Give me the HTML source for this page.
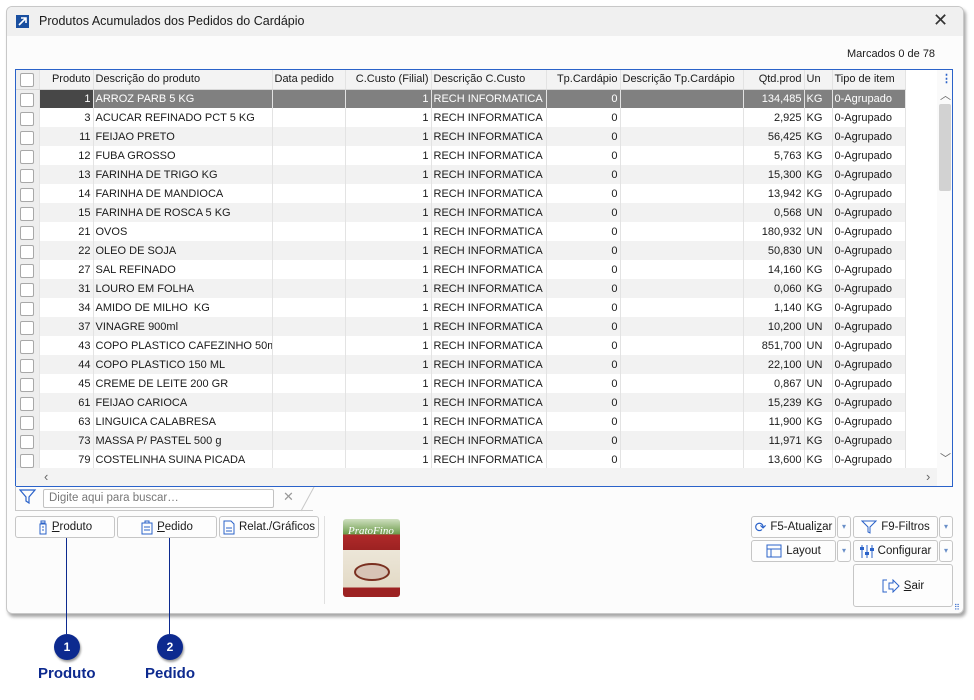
<!DOCTYPE html>
<html><head><meta charset="utf-8"><style>
*{box-sizing:border-box;margin:0;padding:0}
body{width:974px;height:700px;background:#fff;font-family:"Liberation Sans",sans-serif;font-size:11px;color:#1a1a1a;position:relative;overflow:hidden}
.abs{position:absolute}
.win{left:6px;top:6px;width:958px;height:608px;border:1px solid #c8c8c8;border-radius:6px;background:#fcfcfc;box-shadow:2px 3px 3px rgba(0,0,0,.35);overflow:hidden}
.title{left:0;top:0;width:100%;height:29px;background:#f0f0f0}
table{border-collapse:collapse;table-layout:fixed}
td{height:19px;border-right:1px solid #e3e3e3;padding:0 2px;white-space:nowrap;overflow:hidden;line-height:18px}
tr.h td{background:#f3f3f3;border-bottom:1px solid #d8d8d8}
tr.o td{background:#f2f2f2}
tr.e td{background:#fff}
tr.s td{background:#808080;color:#fff}
tr.s td.p{background:#474747}
td.c{background:#eeeeee!important;padding:0}
.cb{width:14px;height:14px;border:1px solid #a8a8a8;border-radius:2px;background:#fff;margin:2px 0 0 4px}
.r{text-align:right}
.btn{position:absolute;border:1px solid #c6c6c6;border-radius:3px;background:#fdfdfd;font-size:11.5px;display:flex;align-items:center;justify-content:center;gap:4px;white-space:nowrap}
.dd{position:absolute;width:14px;border:1px solid #c6c6c6;border-radius:3px;background:#fdfdfd;color:#6a8fc8;font-size:8px;text-align:center}
.circ{position:absolute;width:26px;height:26px;border-radius:50%;background:#0d2a8f;color:#fff;font-weight:bold;font-size:12px;text-align:center;line-height:26px;box-shadow:1px 2px 2px rgba(0,0,0,.4)}
.lbl{position:absolute;color:#0d2a8f;font-weight:bold;font-size:15px}
u{text-decoration:underline}
</style></head><body>
<div class="abs win">
 <div class="abs title"></div>
 <div class="abs" style="left:9px;top:8px;width:13px;height:13px;background:#1a4fa0"><svg width="13" height="13"><path d="M3 10L10 3M5 3H10V8" stroke="#fff" stroke-width="1.6" fill="none"/></svg></div>
 <div class="abs" style="left:32px;top:7px;font-size:12.5px">Produtos Acumulados dos Pedidos do Cardápio</div>
 <div class="abs" style="left:926px;top:3px;font-size:18px;color:#333">✕</div>
 <div class="abs" style="left:840px;top:41px;font-size:11px">Marcados 0 de 78</div>
</div>
<div class="abs" style="left:15px;top:69px;width:938px;height:418px;border:1px solid #2a62c9;background:#fff;overflow:hidden">
<table style="width:889px">
<colgroup><col style="width:23px"><col style="width:54px"><col style="width:179px"><col style="width:73px"><col style="width:86px"><col style="width:115px"><col style="width:74px"><col style="width:123px"><col style="width:61px"><col style="width:28px"><col style="width:73px"></colgroup>
<tr class="h"><td class="c"><div class="cb"></div></td><td class="r">Produto</td><td>Descrição do produto</td><td>Data pedido</td><td class="r">C.Custo (Filial)</td><td>Descrição C.Custo</td><td class="r">Tp.Cardápio</td><td>Descrição Tp.Cardápio</td><td class="r">Qtd.prod</td><td>Un</td><td>Tipo de item</td></tr>
<tr class="s"><td class="c"><div class="cb"></div></td><td class="r p">1</td><td>ARROZ PARB 5 KG</td><td></td><td class="r">1</td><td>RECH INFORMATICA</td><td class="r">0</td><td></td><td class="r">134,485</td><td>KG</td><td>0-Agrupado</td></tr>
<tr class="e"><td class="c"><div class="cb"></div></td><td class="r">3</td><td>ACUCAR REFINADO PCT 5 KG</td><td></td><td class="r">1</td><td>RECH INFORMATICA</td><td class="r">0</td><td></td><td class="r">2,925</td><td>KG</td><td>0-Agrupado</td></tr>
<tr class="o"><td class="c"><div class="cb"></div></td><td class="r">11</td><td>FEIJAO PRETO</td><td></td><td class="r">1</td><td>RECH INFORMATICA</td><td class="r">0</td><td></td><td class="r">56,425</td><td>KG</td><td>0-Agrupado</td></tr>
<tr class="e"><td class="c"><div class="cb"></div></td><td class="r">12</td><td>FUBA GROSSO</td><td></td><td class="r">1</td><td>RECH INFORMATICA</td><td class="r">0</td><td></td><td class="r">5,763</td><td>KG</td><td>0-Agrupado</td></tr>
<tr class="o"><td class="c"><div class="cb"></div></td><td class="r">13</td><td>FARINHA DE TRIGO KG</td><td></td><td class="r">1</td><td>RECH INFORMATICA</td><td class="r">0</td><td></td><td class="r">15,300</td><td>KG</td><td>0-Agrupado</td></tr>
<tr class="e"><td class="c"><div class="cb"></div></td><td class="r">14</td><td>FARINHA DE MANDIOCA</td><td></td><td class="r">1</td><td>RECH INFORMATICA</td><td class="r">0</td><td></td><td class="r">13,942</td><td>KG</td><td>0-Agrupado</td></tr>
<tr class="o"><td class="c"><div class="cb"></div></td><td class="r">15</td><td>FARINHA DE ROSCA 5 KG</td><td></td><td class="r">1</td><td>RECH INFORMATICA</td><td class="r">0</td><td></td><td class="r">0,568</td><td>UN</td><td>0-Agrupado</td></tr>
<tr class="e"><td class="c"><div class="cb"></div></td><td class="r">21</td><td>OVOS</td><td></td><td class="r">1</td><td>RECH INFORMATICA</td><td class="r">0</td><td></td><td class="r">180,932</td><td>UN</td><td>0-Agrupado</td></tr>
<tr class="o"><td class="c"><div class="cb"></div></td><td class="r">22</td><td>OLEO DE SOJA</td><td></td><td class="r">1</td><td>RECH INFORMATICA</td><td class="r">0</td><td></td><td class="r">50,830</td><td>UN</td><td>0-Agrupado</td></tr>
<tr class="e"><td class="c"><div class="cb"></div></td><td class="r">27</td><td>SAL REFINADO</td><td></td><td class="r">1</td><td>RECH INFORMATICA</td><td class="r">0</td><td></td><td class="r">14,160</td><td>KG</td><td>0-Agrupado</td></tr>
<tr class="o"><td class="c"><div class="cb"></div></td><td class="r">31</td><td>LOURO EM FOLHA</td><td></td><td class="r">1</td><td>RECH INFORMATICA</td><td class="r">0</td><td></td><td class="r">0,060</td><td>KG</td><td>0-Agrupado</td></tr>
<tr class="e"><td class="c"><div class="cb"></div></td><td class="r">34</td><td>AMIDO DE MILHO &nbsp;KG</td><td></td><td class="r">1</td><td>RECH INFORMATICA</td><td class="r">0</td><td></td><td class="r">1,140</td><td>KG</td><td>0-Agrupado</td></tr>
<tr class="o"><td class="c"><div class="cb"></div></td><td class="r">37</td><td>VINAGRE 900ml</td><td></td><td class="r">1</td><td>RECH INFORMATICA</td><td class="r">0</td><td></td><td class="r">10,200</td><td>UN</td><td>0-Agrupado</td></tr>
<tr class="e"><td class="c"><div class="cb"></div></td><td class="r">43</td><td>COPO PLASTICO CAFEZINHO 50ml</td><td></td><td class="r">1</td><td>RECH INFORMATICA</td><td class="r">0</td><td></td><td class="r">851,700</td><td>UN</td><td>0-Agrupado</td></tr>
<tr class="o"><td class="c"><div class="cb"></div></td><td class="r">44</td><td>COPO PLASTICO 150 ML</td><td></td><td class="r">1</td><td>RECH INFORMATICA</td><td class="r">0</td><td></td><td class="r">22,100</td><td>UN</td><td>0-Agrupado</td></tr>
<tr class="e"><td class="c"><div class="cb"></div></td><td class="r">45</td><td>CREME DE LEITE 200 GR</td><td></td><td class="r">1</td><td>RECH INFORMATICA</td><td class="r">0</td><td></td><td class="r">0,867</td><td>UN</td><td>0-Agrupado</td></tr>
<tr class="o"><td class="c"><div class="cb"></div></td><td class="r">61</td><td>FEIJAO CARIOCA</td><td></td><td class="r">1</td><td>RECH INFORMATICA</td><td class="r">0</td><td></td><td class="r">15,239</td><td>KG</td><td>0-Agrupado</td></tr>
<tr class="e"><td class="c"><div class="cb"></div></td><td class="r">63</td><td>LINGUICA CALABRESA</td><td></td><td class="r">1</td><td>RECH INFORMATICA</td><td class="r">0</td><td></td><td class="r">11,900</td><td>KG</td><td>0-Agrupado</td></tr>
<tr class="o"><td class="c"><div class="cb"></div></td><td class="r">73</td><td>MASSA P/ PASTEL 500 g</td><td></td><td class="r">1</td><td>RECH INFORMATICA</td><td class="r">0</td><td></td><td class="r">11,971</td><td>KG</td><td>0-Agrupado</td></tr>
<tr class="e"><td class="c"><div class="cb"></div></td><td class="r">79</td><td>COSTELINHA SUINA PICADA</td><td></td><td class="r">1</td><td>RECH INFORMATICA</td><td class="r">0</td><td></td><td class="r">13,600</td><td>KG</td><td>0-Agrupado</td></tr>
</table>
<div class="abs" style="left:0;top:398px;width:921px;height:18px;background:#f3f3f3"></div>
<div class="abs" style="left:28px;top:399px;color:#666;font-size:13px">‹</div>
<div class="abs" style="left:910px;top:399px;color:#666;font-size:13px">›</div>
<div class="abs" style="left:921px;top:0;width:15px;height:416px;background:#fafafa"></div>
<div class="abs" style="left:923px;top:34px;width:12px;height:87px;background:#d2d2d2;border-radius:2px"></div>
<div class="abs" style="left:925px;top:2px;color:#2a62c9;font-size:11px;font-weight:bold">⋮</div>
<div class="abs" style="left:924px;top:17px;color:#666;font-size:11px">︿</div>
<div class="abs" style="left:924px;top:380px;color:#666;font-size:11px">﹀</div>
</div>
<div class="abs" style="left:15px;top:486px;width:298px;height:25px;border-bottom:1px solid #c8c8c8;border-left:1px solid #c8c8c8"></div>
<svg class="abs" style="left:19px;top:489px" width="18" height="16"><path d="M1 1H16L10 8V14L7 12V8Z" fill="none" stroke="#2a62c9" stroke-width="1.2"/></svg>
<div class="abs" style="left:43px;top:489px;width:231px;height:19px;border:1px solid #c2c2c2;border-radius:2px;background:#fff;color:#777;padding:2px 5px;font-size:11.5px">Digite aqui para buscar…</div>
<div class="abs" style="left:283px;top:489px;color:#999;font-size:13px">✕</div>
<svg class="abs" style="left:300px;top:486px" width="16" height="26"><path d="M1 25L14 1" stroke="#c8c8c8"/></svg>
<div class="btn" style="left:15px;top:516px;width:100px;height:22px"><svg width="10" height="15"><path d="M3 1H7V3H3Z M2 4H8V14H2Z M4 7H6M4 10H6" fill="none" stroke="#2a62c9"/></svg><span><u>P</u>roduto</span></div>
<div class="btn" style="left:117px;top:516px;width:100px;height:22px"><svg width="12" height="15"><path d="M1 3H11V14H1Z M4 1H8V3H4Z M3 7H9M3 10H9" fill="none" stroke="#2a62c9"/></svg><span><u>P</u>edido</span></div>
<div class="btn" style="left:219px;top:516px;width:100px;height:22px"><svg width="12" height="15"><path d="M1 1H8L11 4V14H1Z M3 8H9M3 11H9" fill="none" stroke="#2a62c9"/></svg><span>Relat./Gráficos</span></div>
<div class="abs" style="left:324px;top:516px;width:1px;height:88px;background:#e0e0e0"></div>
<div class="abs" style="left:343px;top:519px;width:57px;height:78px;border-radius:3px;background:linear-gradient(#cfe0c0 0,#6a9a48 20%,#b02a2a 20%,#9c2222 40%,#ece6d8 40%,#e3dac6 88%,#9c2222 88%)"></div>
<div class="abs" style="left:348px;top:525px;color:#fff;font-style:italic;font-family:'Liberation Serif',serif;font-size:11px">PratoFino</div>
<div class="abs" style="left:354px;top:563px;width:36px;height:18px;border-radius:50%;background:#d7c3b5;border:2px solid #7a3020"></div>
<div class="btn" style="left:751px;top:516px;width:85px;height:22px"><span style="color:#2a62c9;font-size:14px">⟳</span><span>F5-Atuali<u>z</u>ar</span></div>
<div class="dd" style="left:837px;top:516px;height:22px;line-height:20px">▾</div>
<div class="btn" style="left:853px;top:516px;width:85px;height:22px"><svg width="16" height="14"><path d="M1 1H15L9 7V13L7 12V7Z" fill="none" stroke="#2a62c9"/></svg><span>F9-Filtros</span></div>
<div class="dd" style="left:939px;top:516px;height:22px;line-height:20px">▾</div>
<div class="btn" style="left:751px;top:540px;width:85px;height:22px"><svg width="16" height="14"><path d="M1 1H15V13H1Z M1 5H15M5 5V13" fill="none" stroke="#2a62c9"/></svg><span>Layout</span></div>
<div class="dd" style="left:837px;top:540px;height:22px;line-height:20px">▾</div>
<div class="btn" style="left:853px;top:540px;width:85px;height:22px"><svg width="14" height="15"><path d="M2 1V14M7 1V14M12 1V14" stroke="#2a62c9"/><rect x="0" y="3" width="4" height="3" fill="#2a62c9"/><rect x="5" y="8" width="4" height="3" fill="#2a62c9"/><rect x="10" y="4" width="4" height="3" fill="#2a62c9"/></svg><span>Configurar</span></div>
<div class="dd" style="left:939px;top:540px;height:22px;line-height:20px">▾</div>
<div class="btn" style="left:853px;top:564px;width:100px;height:43px"><svg width="18" height="14"><path d="M5 1H1V13H5 M7 4H11V1L17 7L11 13V10H7Z" fill="none" stroke="#2a62c9"/></svg><span><u>S</u>air</span></div>
<div class="abs" style="left:954px;top:603px;color:#2a62c9;font-size:8px">⠿</div>
<div class="abs" style="left:66px;top:538px;width:1px;height:96px;background:#0d2a8f"></div>
<div class="abs" style="left:169px;top:538px;width:1px;height:96px;background:#0d2a8f"></div>
<div class="circ" style="left:54px;top:634px">1</div>
<div class="circ" style="left:157px;top:634px">2</div>
<div class="lbl" style="left:38px;top:665px">Produto</div>
<div class="lbl" style="left:145px;top:665px">Pedido</div>
</body></html>
